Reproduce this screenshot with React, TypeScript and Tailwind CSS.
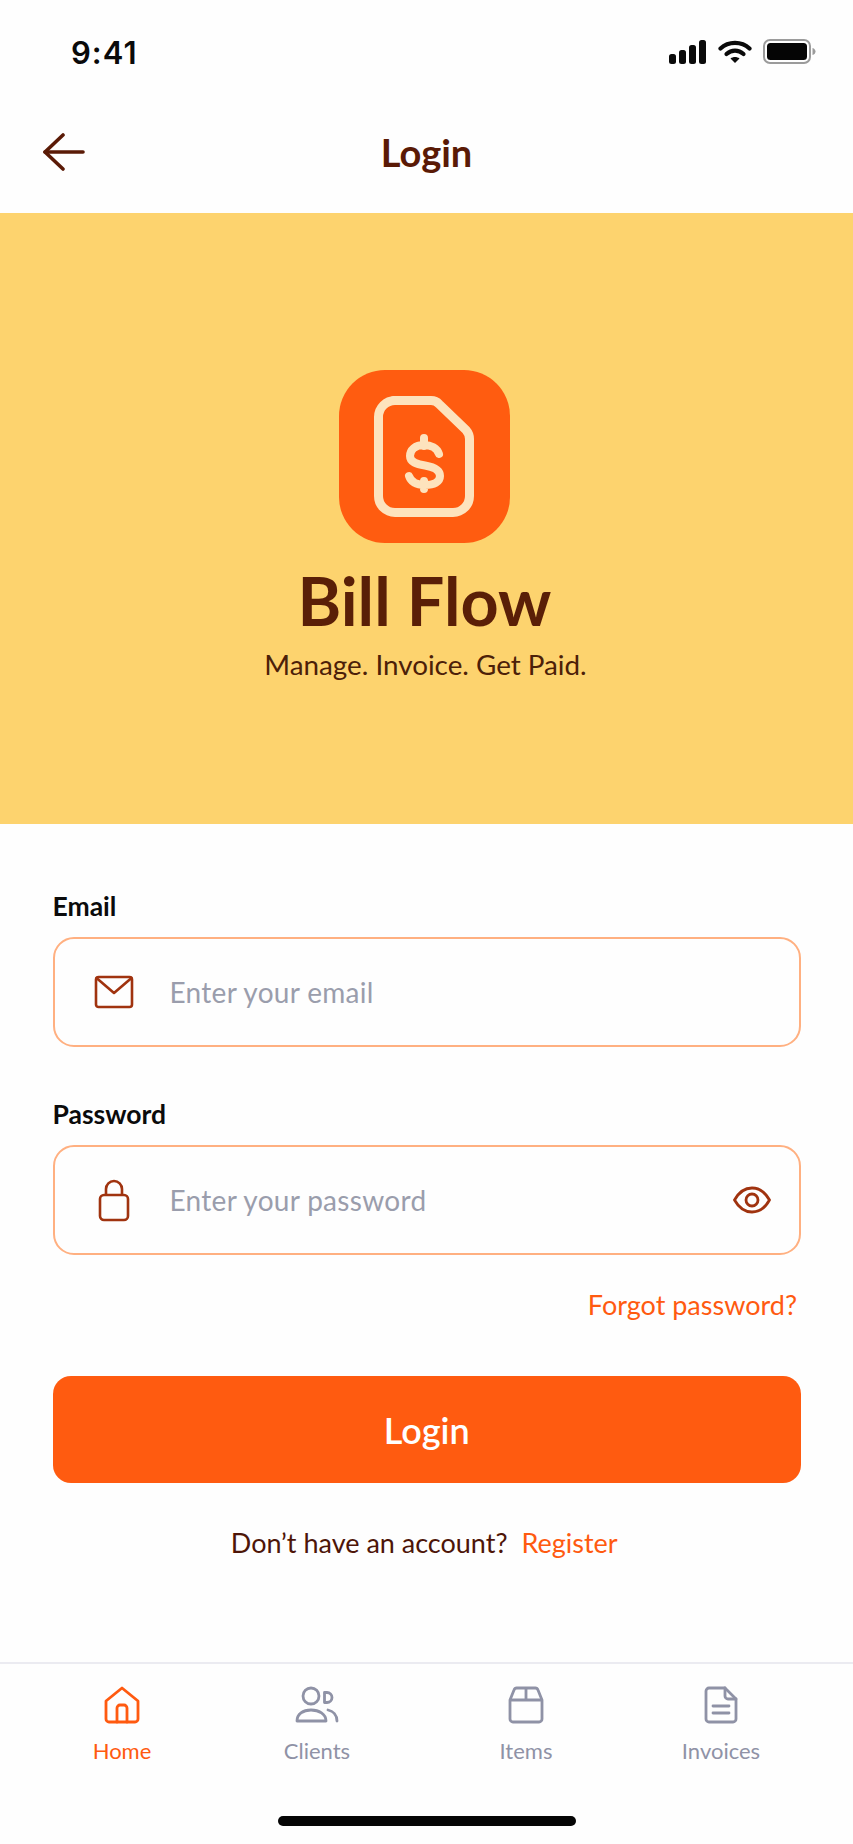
import React from "react";

const Dark = "#5a1a06";

function Field({ label, placeholder, icon, right }: { label: string; placeholder: string; icon: React.ReactNode; right?: React.ReactNode }) {
  return (
    <div>
      <div className="text-[26.5px] leading-[30px] font-bold text-[#0b0b0b] mb-[16px]">{label}</div>
      <div className="h-[110px] rounded-[21px] border-2 border-[#ffb081] bg-[#fefefe] flex items-center pl-[39px] pr-[28px]">
        <div className="w-[40px] flex justify-center shrink-0">{icon}</div>
        <input
          readOnly
          placeholder={placeholder}
          className="ml-[36px] flex-1 min-w-0 bg-transparent outline-none text-[28px] text-[#3a3a3a] placeholder:text-[#9a9dac] tracking-[0.3px]"
        />
        {right}
      </div>
    </div>
  );
}

function NavItem({ label, color, children }: { label: string; color: string; children: React.ReactNode }) {
  return (
    <div className="flex flex-col items-center">
      <div className="h-[38px] flex items-center justify-center">{children}</div>
      <div className="text-[22px] leading-[26px] mt-[14px]" style={{ color }}>{label}</div>
    </div>
  );
}

export default function App() {
  return (
    <div className="w-[853px] h-[1844px] bg-[#fefefe] flex flex-col overflow-hidden font-['Lato',sans-serif]">
      {/* Status bar */}
      <div className="h-[103px] shrink-0 flex items-start justify-between pt-[34px] pl-[71px] pr-[37px]">
        <span className="font-['Inter',sans-serif] font-semibold text-[31px] tracking-[1px] leading-[38px] text-[#0a0a0a]">9:41</span>
        <div className="flex items-center gap-[11px] pt-[5px]">
          <svg width="38" height="24" viewBox="0 0 38 24" fill="#0a0a0a">
            <rect x="0" y="14" width="7" height="10" rx="2.5" />
            <rect x="10" y="10" width="7" height="14" rx="2.5" />
            <rect x="20" y="5" width="7" height="19" rx="2.5" />
            <rect x="30" y="0" width="7" height="24" rx="2.5" />
          </svg>
          <svg width="34" height="24" viewBox="0 0 34 24" fill="none" stroke="#0a0a0a" strokeWidth="4.2" strokeLinecap="round">
            <path d="M2.5 8.5C10.5 1 23.5 1 31.5 8.5" />
            <path d="M8.5 14C13.5 9.5 20.5 9.5 25.5 14" />
            <path d="M17 23L12.5 18.5C15 16.5 19 16.5 21.5 18.5Z" fill="#0a0a0a" stroke="none" />
          </svg>
          <svg width="53" height="25" viewBox="0 0 53 25" fill="none">
            <rect x="1" y="1" width="46" height="23" rx="6" stroke="#9b9b9b" strokeWidth="2" />
            <rect x="4" y="4" width="40" height="17" rx="3.5" fill="#050505" />
            <path d="M49.5 9C51.5 9.5 52.5 11 52.5 12.5C52.5 14 51.5 15.5 49.5 16Z" fill="#9b9b9b" />
          </svg>
        </div>
      </div>

      {/* Header */}
      <div className="h-[110px] shrink-0 relative flex items-center justify-center pb-[12px]">
        <svg className="absolute left-[43px] top-[30px]" width="42" height="38" viewBox="0 0 42 38" fill="none" stroke={Dark} strokeWidth="3.6" strokeLinecap="round" strokeLinejoin="round">
          <path d="M20 2L2 19L20 36" />
          <path d="M2 19H40" />
        </svg>
        <span className="text-[38px] leading-[42px] font-bold text-[#5a1a06]">Login</span>
      </div>

      {/* Hero */}
      <div className="h-[611px] shrink-0 bg-[#fdd36e] flex flex-col items-center pt-[157px]">
        <div className="w-[171px] h-[173px] mr-[5px] rounded-[46px] bg-[#ff5c10] flex items-center justify-center">
          <svg width="171" height="173" viewBox="0 0 171 173" fill="none" stroke="#fde3bd" strokeWidth="9" strokeLinecap="round" strokeLinejoin="round">
            <path d="M54 30.5H92Q97 30.5 100 34L127 60Q130.5 64 130.5 69V126A16.5 16.5 0 0 1 114 142.5H56A16.5 16.5 0 0 1 39.5 126V47A16.5 16.5 0 0 1 56 30.5Z" />
            <path strokeWidth="8" d="M85 68V76M85 111V119M100 84C98 78 92 75 85 75C76 75 71 80 71 86C71 92 77 94 86 95.5C95 97 101 100 101 106C101 112 95 115 86 115C78 115 72 112 70 106" />
          </svg>
        </div>
        <div className="mt-[19px] mr-[4px] text-[66.5px] leading-[76px] font-bold text-[#5a1f07]">Bill Flow</div>
        <div className="mt-[10px] mr-[2px] text-[27.8px] leading-[34px] text-[#4c2008]">Manage. Invoice. Get Paid.</div>
      </div>

      {/* Form */}
      <div className="pl-[52.5px] pr-[52px] pt-[67px] flex-1">
        <div className="flex flex-col gap-[52px]">
          <Field
            label="Email"
            placeholder="Enter your email"
            icon={
              <svg width="40" height="34" viewBox="0 0 40 34" fill="none" stroke="#a0330f" strokeWidth="2.6" strokeLinejoin="round" strokeLinecap="round">
                <rect x="2" y="2" width="36" height="30" rx="2.5" />
                <path d="M2.5 3L20 18L37.5 3" />
              </svg>
            }
          />
          <Field
            label="Password"
            placeholder="Enter your password"
            icon={
              <svg width="32" height="43" viewBox="0 0 32 43" fill="none" stroke="#a0330f" strokeWidth="2.6" strokeLinejoin="round">
                <rect x="2" y="16" width="28" height="25" rx="4" />
                <path d="M8 16V10A8 8 0 0 1 24 10V16" />
              </svg>
            }
            right={
              <svg width="38" height="28" viewBox="0 0 38 28" fill="none" stroke="#a0330f" strokeWidth="2.8" className="shrink-0">
                <path d="M1.5 14C6 6 12 2 19 2C26 2 32 6 36.5 14C32 22 26 26 19 26C12 26 6 22 1.5 14Z" strokeLinejoin="round" />
                <circle cx="19" cy="14" r="6" />
              </svg>
            }
          />
        </div>
        <div className="mt-[33px] text-right pr-[4px] text-[27px] leading-[34px] text-[#ff5a10]">Forgot password?</div>
        <div className="mt-[54px] h-[107px] rounded-[18px] bg-[#ff5b10] flex items-center justify-center text-[36px] font-semibold text-white">Login</div>
        <div className="mt-[43px] mr-[5px] flex justify-center gap-[14px] text-[27px] leading-[34px]">
          <span className="text-[#4d1508]">Don’t have an account?</span>
          <span className="text-[#ff5a10]">Register</span>
        </div>
      </div>

      {/* Bottom nav */}
      <div className="h-[182px] shrink-0 border-t-2 border-[#ebebf1] flex flex-col">
        <div className="pt-[22px] grid grid-cols-[244px_146px_272px_118px]">
          <NavItem label="Home" color="#ff5a10">
            <svg width="36" height="38" viewBox="0 0 36 38" fill="none" stroke="#ff5a10" strokeWidth="2.8" strokeLinejoin="round" strokeLinecap="round">
              <path d="M2 15L18 2L34 15V33A3 3 0 0 1 31 36H5A3 3 0 0 1 2 33Z" />
              <path d="M13 36V22A3 3 0 0 1 16 19H20A3 3 0 0 1 23 22V36" />
            </svg>
          </NavItem>
          <NavItem label="Clients" color="#8f92a6">
            <svg width="44" height="38" viewBox="0 0 44 38" fill="none" stroke="#8f92a6" strokeWidth="2.8" strokeLinecap="round" strokeLinejoin="round">
              <circle cx="16" cy="10" r="8" />
              <path d="M2 35C2 28 8 24 16 24C24 24 31 28 31 35Z" />
              <path d="M29.5 6.5H32A5 5 0 0 1 32 16.5H29.5Z" />
              <path d="M33 24C38 25 42 29 42 35" />
            </svg>
          </NavItem>
          <NavItem label="Items" color="#8f92a6">
            <svg width="36" height="38" viewBox="0 0 36 38" fill="none" stroke="#8f92a6" strokeWidth="2.8" strokeLinejoin="round">
              <path d="M2 14L6 4A3 3 0 0 1 9 2H27A3 3 0 0 1 30 4L34 14V33A3 3 0 0 1 31 36H5A3 3 0 0 1 2 33Z" />
              <path d="M2 14H34M18 2V14" />
            </svg>
          </NavItem>
          <NavItem label="Invoices" color="#8f92a6">
            <svg width="34" height="38" viewBox="0 0 34 38" fill="none" stroke="#8f92a6" strokeWidth="2.8" strokeLinejoin="round" strokeLinecap="round">
              <path d="M5 2H21L32 13V33A3 3 0 0 1 29 36H5A3 3 0 0 1 2 33V5A3 3 0 0 1 5 2Z" />
              <path d="M21 2V10A3 3 0 0 0 24 13H32" />
              <path d="M9 20H25M9 27H25" />
            </svg>
          </NavItem>
        </div>
        <div className="mt-auto mb-[18px] mx-auto w-[298px] h-[10px] rounded-full bg-[#050505]" />
      </div>
    </div>
  );
}
